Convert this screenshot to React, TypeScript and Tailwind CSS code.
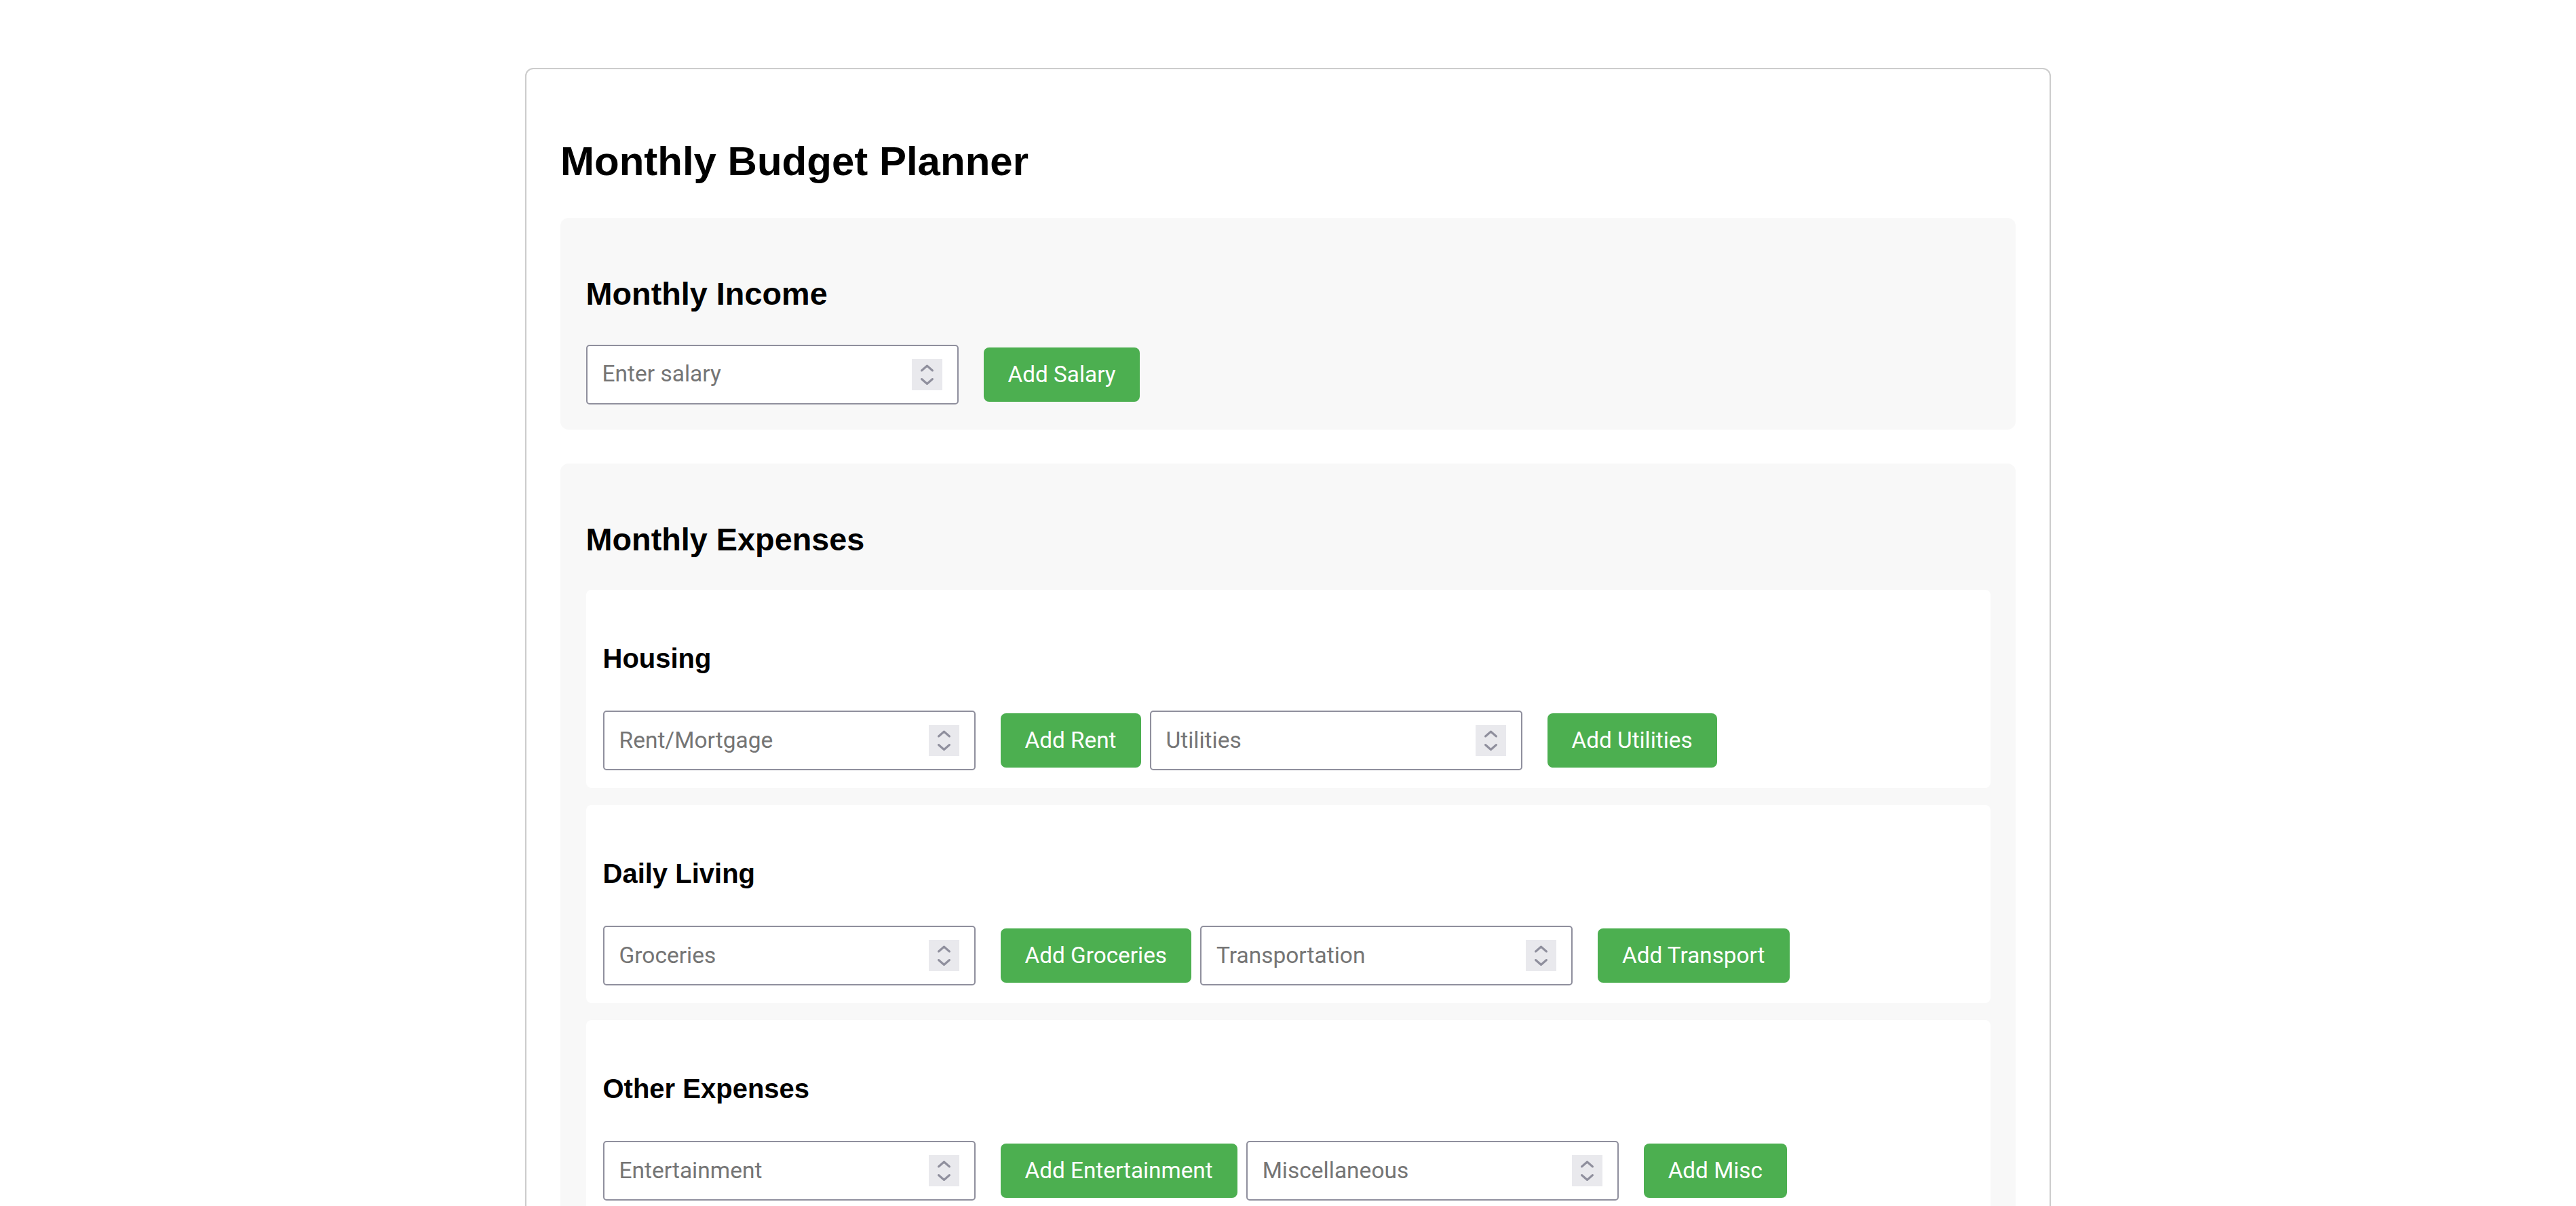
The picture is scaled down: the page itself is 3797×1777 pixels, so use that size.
import React from "react";

type Field = { placeholder: string; action: string };

const groups: { title: string; fields: Field[] }[] = [
  {
    title: "Housing",
    fields: [
      { placeholder: "Rent/Mortgage", action: "Add Rent" },
      { placeholder: "Utilities", action: "Add Utilities" },
    ],
  },
  {
    title: "Daily Living",
    fields: [
      { placeholder: "Groceries", action: "Add Groceries" },
      { placeholder: "Transportation", action: "Add Transport" },
    ],
  },
  {
    title: "Other Expenses",
    fields: [
      { placeholder: "Entertainment", action: "Add Entertainment" },
      { placeholder: "Miscellaneous", action: "Add Misc" },
    ],
  },
];

function Spinner() {
  return (
    <svg width="45" height="46" viewBox="0 0 45 46" className="shrink-0 bg-[#e9e9ed]">
      <polyline
        points="14.5,17 22.5,10 30.5,17"
        fill="none"
        stroke="#8f8f9d"
        strokeWidth="3"
        strokeLinecap="round"
        strokeLinejoin="round"
      />
      <polyline
        points="14.5,29.5 22.5,36.5 30.5,29.5"
        fill="none"
        stroke="#8f8f9d"
        strokeWidth="3"
        strokeLinecap="round"
        strokeLinejoin="round"
      />
    </svg>
  );
}

function AmountInput({ placeholder }: { placeholder: string }) {
  return (
    <div className="mr-[37px] flex h-[88px] w-[549px] shrink-0 items-center rounded-[5px] border-2 border-[#8f8f9d] bg-white pl-[22px] pr-[22px]">
      <input
        type="text"
        inputMode="decimal"
        placeholder={placeholder}
        className="min-w-0 flex-1 bg-transparent font-['Roboto',sans-serif] text-[33.5px] text-black outline-none placeholder:text-[#757575]"
      />
      <Spinner />
    </div>
  );
}

function AddButton({ label, last }: { label: string; last?: boolean }) {
  return (
    <button
      className={
        last
          ? "h-[80px] shrink-0 rounded-[8px] bg-[#4caf50] px-[36px] font-['Roboto',sans-serif] text-[33.3px] text-white"
          : "mr-[13px] h-[80px] shrink-0 rounded-[8px] bg-[#4caf50] px-[36px] font-['Roboto',sans-serif] text-[33.3px] text-white"
      }
    >
      {label}
    </button>
  );
}

export default function App() {
  return (
    <div className="h-screen overflow-hidden bg-white font-['Liberation_Sans',Arial,sans-serif] text-black">
      <div className="mx-auto mt-[100px] w-[2249px] rounded-[12px] border-2 border-[#cccccc] bg-white px-[50px] pt-[50px] pb-[50px]">
        <h1 className="mt-[51px] mb-[49px] text-[60px] leading-[69px] font-bold">Monthly Budget Planner</h1>

        {/* income */}
        <section className="mb-[50px] rounded-[12px] bg-[#f8f8f8] p-[37.5px]">
          <h2 className="mt-[47px] mb-[48px] text-[46.8px] leading-[54px] font-bold">Monthly Income</h2>
          <div className="flex h-[88px] items-center">
            <AmountInput placeholder="Enter salary" />
            <AddButton label="Add Salary" last />
          </div>
        </section>

        {/* expenses */}
        <section className="rounded-[12px] bg-[#f8f8f8] p-[37.5px]">
          <h2 className="mt-[47px] mb-[47.5px] text-[46.8px] leading-[54px] font-bold">Monthly Expenses</h2>
          {groups.map((g) => (
            <div key={g.title} className="mb-[25px] rounded-[8px] bg-white px-[25px] pt-[25px] pb-[26px]">
              <h3 className="mt-[53px] mb-[54px] text-[40px] leading-[46px] font-bold">{g.title}</h3>
              <div className="flex h-[88px] items-center">
                {g.fields.map((f, i) => (
                  <React.Fragment key={f.action}>
                    <AmountInput placeholder={f.placeholder} />
                    <AddButton label={f.action} last={i === g.fields.length - 1} />
                  </React.Fragment>
                ))}
              </div>
            </div>
          ))}
        </section>
      </div>
    </div>
  );
}
